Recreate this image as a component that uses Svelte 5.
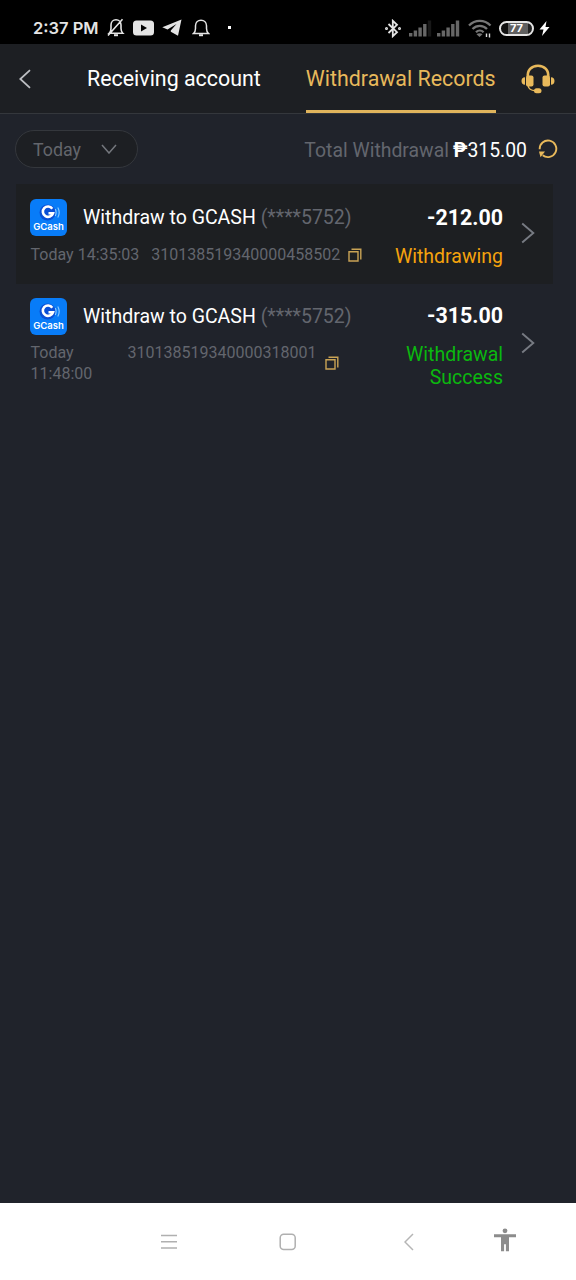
<script lang="ts">
  type WithdrawalRecord = {
    id: string;
    day: string;
    time: string;
    account: string;
    amount: string;
    status: string;
    state: 'pending' | 'success';
  };

  const records: WithdrawalRecord[] = [
    {
      id: '310138519340000458502',
      day: 'Today',
      time: '14:35:03',
      account: '(****5752)',
      amount: '-212.00',
      status: 'Withdrawing',
      state: 'pending',
    },
    {
      id: '310138519340000318001',
      day: 'Today',
      time: '11:48:00',
      account: '(****5752)',
      amount: '-315.00',
      status: 'Withdrawal Success',
      state: 'success',
    },
  ];

  const signalBars = [3.5, 6, 9, 12.5, 16];
</script>

{#snippet signal(bars: number)}
  <svg class="signal" width="23" height="17" viewBox="0 0 23 17">
    {#each signalBars as h, i}
      <rect x={i * 4.7} y={16.5 - h} width="3.4" height={h} fill={i < bars ? '#676767' : '#181818'} />
    {/each}
  </svg>
{/snippet}

<div class="screen">
  <div class="status-bar">
    <div class="status-left">
      <span class="clock">2:37 PM</span>
      <svg width="18" height="19" viewBox="0 0 18 19" fill="none" stroke="#e4e4e4" stroke-width="1.6">
        <path d="M2.2 15.2h13.6c-1.5-1.5-1.8-2.5-1.8-4.6V7c0-3-2.1-5.2-5-5.2S4 4 4 7v3.6c0 2.1-.3 3.1-1.8 4.6zM1 17.5 15.5 1.2" />
        <path d="M7 17.2h4" stroke-width="2" />
      </svg>
      <svg class="video" width="21" height="16" viewBox="0 0 21 16">
        <rect x="0" y=".5" width="21" height="15" rx="3.5" fill="#e4e4e4" />
        <path d="M8 4.5v7l6-3.5z" fill="#000" />
      </svg>
      <svg class="plane" width="20" height="17" viewBox="0 0 20 17" fill="#e4e4e4">
        <path d="M19.5.5.3 8.300 5.500 10.500 14.500 5 8.800 11.500v1.200l7.200 4.100z" />
      </svg>
      <svg class="bell" width="18" height="18" viewBox="0 0 18 18" fill="none" stroke="#e4e4e4" stroke-width="1.5">
        <path d="M1.5 14.5h15c-1.7-1.5-2-2.7-2-5V6.800C14.500 3.500 12.200 1.200 9 1.200S3.500 3.500 3.500 6.800v2.700c0 2.300-.3 3.500-2 5z" />
        <path d="M7 16.2h4" stroke-width="2" />
      </svg>
      <span class="dot"></span>
    </div>
    <div class="status-right">
      <svg width="16" height="19" viewBox="0 0 16 19" fill="none" stroke="#e4e4e4" stroke-width="1.8">
        <path d="M3.5 5 12 13.2l-4.2 4V1.8l4.2 4L3.5 14" />
        <circle cx="1.5" cy="9.5" r=".6" />
        <circle cx="14.5" cy="9.5" r=".6" />
      </svg>
      {@render signal(4)}
      {@render signal(5)}
      <svg class="wifi" width="24" height="19" viewBox="0 0 24 19" fill="none" stroke="#777" stroke-width="2.3">
        <path d="M1 6.500c6-6.200 15.500-6.200 21.500 0M4.500 10c4.200-4.200 10.500-4.200 14.500 0M8 13.300c2.200-2.200 5.400-2.200 7.600 0" />
        <path d="M8.5 15.2c1.600-1.400 4.500-1.400 6 0l-3 2.8z" fill="#777" stroke="none" />
        <path d="M18.5 18v-3.500M21.500 14.500v4" stroke="#ddd" stroke-width="1.4" />
      </svg>
      <span class="battery">77</span>
      <svg width="11" height="15" viewBox="0 0 11 15" fill="#fff">
        <path d="M7.500 0 .5 8.500h4L3 15l7.500-9h-4z" />
      </svg>
    </div>
  </div>

  <header>
    <button class="back" aria-label="Back">
      <svg width="12" height="20" viewBox="0 0 12 20" fill="none" stroke="#bcbec2" stroke-width="1.8">
        <path d="M11 1.200 1.300 10l9.700 8.800" />
      </svg>
    </button>
    <nav>
      <span class="tab">Receiving account</span>
      <span class="tab active">Withdrawal Records</span>
    </nav>
    <button class="support" aria-label="Support">
      <svg width="34" height="30" viewBox="0 0 34 30" fill="#e8b95b">
        <path d="M7 13C5.800 6.200 10.500 1.700 17 1.700S28.200 6.200 27 13" fill="none" stroke="#e8b95b" stroke-width="2.6" />
        <rect x="5" y="11.5" width="7.5" height="11" rx="2" />
        <rect x="21.5" y="11.5" width="7.5" height="11" rx="2" />
        <path d="M4 13.200v7.600c-2.300 0-3.500-1.700-3.500-3.800s1.200-3.800 3.500-3.800zM30 13.200v7.600c2.300 0 3.500-1.700 3.500-3.800s-1.200-3.800-3.500-3.800z" />
        <path d="M7.200 22c.5 3 2.800 4.500 7 4.700" fill="none" stroke="#e8b95b" stroke-width="1.5" />
        <rect x="13" y="24.3" width="7.5" height="5" rx="2.5" />
      </svg>
    </button>
  </header>

  <div class="filter-row">
    <button class="period">
      Today
      <svg width="16" height="10" viewBox="0 0 16 10" fill="none" stroke="#74777d" stroke-width="1.5">
        <path d="M1 1l7 8 7-8" />
      </svg>
    </button>
    <div class="total">
      <span>Total Withdrawal</span>
      <strong><span class="peso">₱</span>315.00</strong>
      <svg width="20" height="20" viewBox="0 0 20 20" fill="none" stroke="#e8b95b" stroke-width="1.9">
        <path d="M1.700 10.200a8.300 8.300 0 1 1 3 6" />
        <path d="M1 12.500h6L2.500 18.200z" fill="#e8b95b" stroke="none" />
      </svg>
    </div>
  </div>

  <main>
    {#each records as record}
      <div class="record {record.state}">
        <div class="info">
          <div class="title-row">
            <div class="logo">
              <svg width="24" height="17" viewBox="0 0 24 17" fill="none">
                <circle cx="10.5" cy="8.5" r="8" fill="#0a4fd6" />
                <path d="M15.300 4.700A5.200 5.200 0 1 0 16 9.300h-4.500" stroke="#fff" stroke-width="2.6" />
                <path d="M18.300 5q1.600 3.500 0 7M20.800 3.500q2.800 5 0 10" stroke="#8ccaff" stroke-width="1.1" />
              </svg>
              <span>GCash</span>
            </div>
            <span class="title">Withdraw to GCASH <em>{record.account}</em></span>
          </div>
          <div class="meta">
            <span class="date">{record.day} {record.time}</span>
            <span class="number">{record.id}</span>
            <svg class="copy" width="14" height="14" viewBox="0 0 14 14" fill="none" stroke="#c9a355" stroke-width="1.4">
              <path d="M1 3.700h9v9.300H1zM3.500 1.200H12.800V11.500" />
            </svg>
          </div>
        </div>
        <div class="result">
          <span class="amount">{record.amount}</span>
          <span class="status">{record.status}</span>
        </div>
        <svg class="arrow" width="14" height="22" viewBox="0 0 14 22" fill="none" stroke="#777b83" stroke-width="1.9">
          <path d="M1.200 1.500 12.300 11 1.200 20.500" />
        </svg>
      </div>
    {/each}
  </main>

  <footer>
    <svg width="16" height="16" viewBox="0 0 16 16" stroke="#b0b0b0" stroke-width="1.5">
      <path d="M0 1.500h16M0 7.700h16M0 13.900h16" />
    </svg>
    <svg width="18" height="18" viewBox="0 0 18 18" fill="none" stroke="#b0b0b0" stroke-width="1.5">
      <rect x="1.2" y="1.2" width="15" height="15.4" rx="3.5" />
    </svg>
    <svg width="10" height="18" viewBox="0 0 10 18" fill="none" stroke="#b5b5b5" stroke-width="1.5">
      <path d="M9 1 1 9l8 8" />
    </svg>
    <svg class="person" width="22" height="24" viewBox="0 0 22 24" fill="#8c8c8c">
      <circle cx="11" cy="2.8" r="2.4" />
      <path d="M0 6.200h22v3h-7v14h-3.100v-7h-1.800v7H7v-14H0z" />
    </svg>
  </footer>
</div>

<style>
  :global(body) {
    margin: 0;
    background: #20232b;
  }
  .screen {
    display: flex;
    flex-direction: column;
    width: 576px;
    height: 1280px;
    overflow: hidden;
    background: #20232b;
    color: #fff;
    font-family: Roboto, 'Liberation Sans', sans-serif;
  }
  button {
    padding: 0;
    border: 0;
    background: none;
    color: inherit;
    font: inherit;
  }
  svg {
    display: block;
    flex: none;
  }

  .status-bar {
    display: flex;
    justify-content: space-between;
    height: 44px;
    box-sizing: border-box;
    padding: 11px 26px 0 33px;
    background: #000;
  }
  .status-left,
  .status-right {
    display: flex;
    align-items: center;
    height: 33px;
  }
  .status-right {
    height: 34px;
  }
  .clock {
    width: 66px;
    margin-right: 8px;
    color: #e4e4e4;
    font: 600 16.5px/20px Inter, sans-serif;
    white-space: nowrap;
  }
  .video {
    margin-left: 8px;
  }
  .plane {
    margin-left: 8px;
  }
  .bell {
    margin-left: 10px;
  }
  .dot {
    width: 3px;
    height: 3px;
    margin-left: 18px;
    background: #fff;
  }
  .signal {
    margin-left: 8px;
  }
  .signal + .signal {
    margin-left: 5px;
  }
  .wifi {
    margin-left: 8px;
  }
  .battery {
    width: 31px;
    height: 11px;
    margin: 0 5px 0 7px;
    border: 2px solid #e4e4e4;
    border-radius: 8px;
    background: linear-gradient(90deg, #111 22%, #606060 22%, #606060 88%, #222 88%);
    font: 700 11px/11px Inter, sans-serif;
    text-align: center;
  }

  header {
    display: flex;
    height: 70px;
    box-sizing: border-box;
    border-bottom: 1px solid #34373c;
    background: #1d1f23;
  }
  .back {
    display: flex;
    align-items: center;
    width: 87px;
    height: 69px;
    box-sizing: border-box;
    padding-left: 19px;
  }
  nav {
    display: flex;
    gap: 45px;
  }
  .tab {
    height: 66px;
    border-bottom: 3px solid transparent;
    font-size: 21.4px;
    line-height: 69px;
    white-space: nowrap;
  }
  .tab.active {
    border-color: #e0b45c;
    color: #e8b95b;
  }
  .support {
    display: flex;
    align-items: center;
    height: 70px;
    margin-left: 25px;
  }

  .filter-row {
    display: flex;
    justify-content: space-between;
    align-items: center;
    height: 70px;
    padding: 0 18px 0 15px;
  }
  .period {
    display: flex;
    justify-content: space-between;
    align-items: center;
    width: 123px;
    height: 38px;
    box-sizing: border-box;
    padding: 0 20px 0 17px;
    border: 1px solid #34373c;
    border-radius: 19px;
    background: #1d1f23;
    color: #63666c;
    font-size: 17.8px;
  }
  .total {
    display: flex;
    align-items: center;
    color: #63666e;
    font-size: 19.4px;
    line-height: 24px;
    white-space: nowrap;
  }
  .total > span,
  .total strong {
    padding-top: 3px;
  }
  .total strong {
    margin: 0 11px 0 4px;
    color: #fff;
    font-weight: 400;
  }
  .peso {
    font-weight: 700;
  }

  main {
    flex: 1;
    padding: 0 23px 0 16px;
  }
  .record {
    display: flex;
    align-items: center;
    box-sizing: border-box;
    height: 100px;
    padding: 0 18px 0 14px;
  }
  .record.pending {
    background: #1d1f22;
  }
  .record.success {
    height: 119px;
  }
  .info {
    width: 334px;
    height: 100%;
    box-sizing: border-box;
    padding-top: 15px;
  }
  .success .info,
  .success .result {
    padding-top: 13px;
  }
  .title-row {
    display: flex;
    align-items: center;
    height: 37px;
  }
  .success .title-row {
    height: 38px;
  }
  .logo {
    display: flex;
    flex-direction: column;
    align-items: center;
    width: 37px;
    height: 37px;
    box-sizing: border-box;
    padding-top: 5px;
    border-radius: 6px;
    background: #087cf8;
  }
  .logo span {
    margin-top: -1px;
    font: 600 9.5px/13px Inter, sans-serif;
  }
  .title {
    margin-left: 16px;
    font-size: 19.5px;
    line-height: 37px;
    white-space: nowrap;
  }
  .title em {
    color: #63666e;
    font-style: normal;
  }
  .meta {
    display: flex;
    align-items: center;
    margin-top: 8px;
    padding-left: 0.6px;
    color: #63666e;
    font-size: 16px;
    line-height: 21px;
  }
  .success .meta {
    margin-top: 7px;
  }
  .number {
    margin-left: 12px;
  }
  .copy {
    margin-left: 8px;
  }
  .success .date {
    width: 72px;
  }
  .success .number {
    align-self: flex-start;
    margin-left: 25px;
  }
  .success .copy {
    margin-left: 9px;
  }
  .result {
    display: flex;
    flex-direction: column;
    align-items: flex-end;
    width: 139px;
    height: 100%;
    box-sizing: border-box;
    padding-top: 15px;
    text-align: right;
  }
  .amount {
    font-size: 21.4px;
    font-weight: 700;
    line-height: 37px;
  }
  .status {
    width: 112px;
    margin-top: 9px;
    color: #f5a30d;
    font-size: 19.5px;
    line-height: 23px;
  }
  .success .status {
    color: #0bb80f;
  }
  .arrow {
    margin: 0 0 2px 18px;
  }

  footer {
    display: flex;
    align-items: center;
    height: 77px;
    box-sizing: border-box;
    padding-left: 161px;
    background: #fff;
  }
  footer svg:nth-child(2) {
    margin-left: 102px;
  }
  footer svg:nth-child(3) {
    margin-left: 107px;
  }
  footer .person {
    margin: 0 0 4px 80px;
  }
</style>
